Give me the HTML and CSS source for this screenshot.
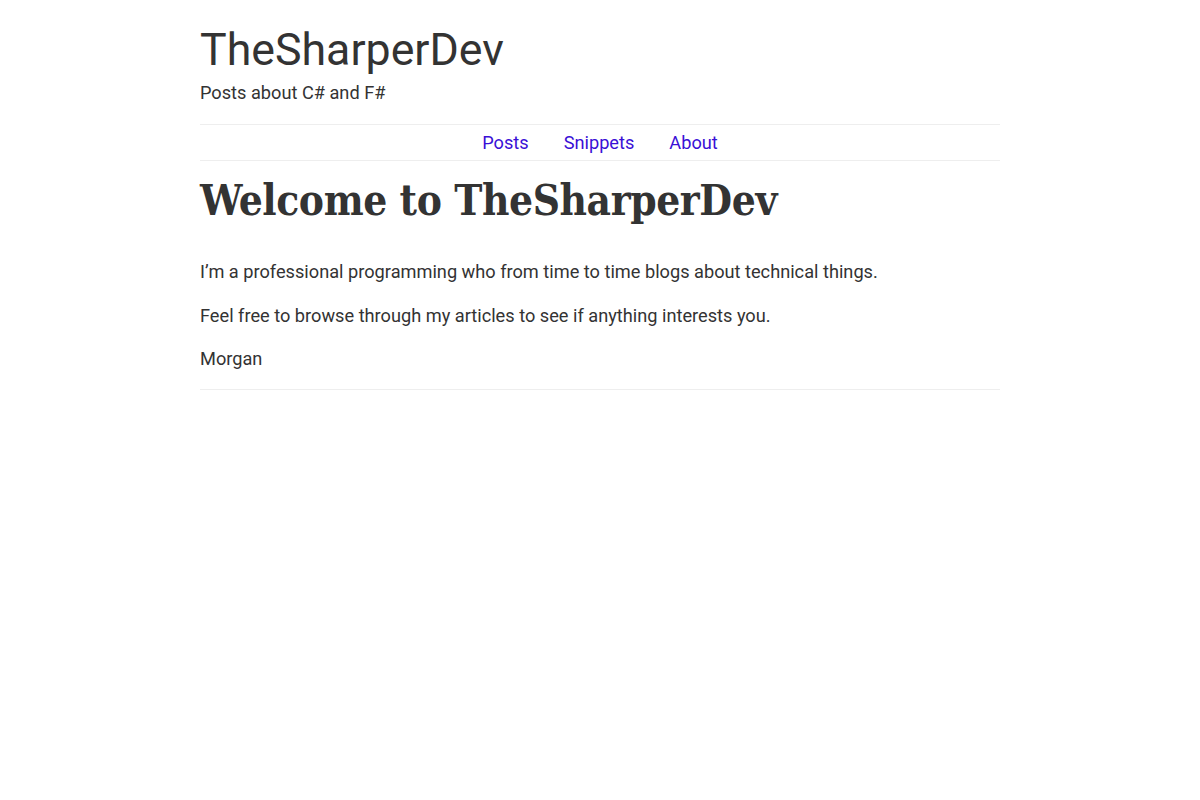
FILE: index.html
```html
<!DOCTYPE html>
<html>
<head>
<meta charset="utf-8">
<title>TheSharperDev</title>
<link rel="stylesheet" href="styles.css">
</head>
<body>
<div class="page">
  <header class="site-header">
    <div class="site-title">TheSharperDev</div>
    <div class="site-tagline">Posts about C# and F#</div>
  </header>
  <nav class="site-nav">
    <a href="#">Posts</a>
    <a href="#">Snippets</a>
    <a href="#">About</a>
  </nav>
  <main class="content">
    <h1 class="headline">Welcome to TheSharperDev</h1>
    <p>I’m a professional programming who from time to time blogs about technical things.</p>
    <p>Feel free to browse through my articles to see if anything interests you.</p>
    <p>Morgan</p>
  </main>
</div>
</body>
</html>
```
FILE: styles.css
```css
html, body {
  margin: 0;
  padding: 0;
  background: #fff;
}
body {
  font-family: Roboto, "Liberation Sans", sans-serif;
  color: #333;
}
.page {
  width: 800px;
  margin: 0 auto;
}
.site-header {
  padding-top: 24px;
  padding-bottom: 17px;
}
.site-title {
  font-size: 44.7px;
  line-height: 52px;
  font-weight: 400;
}
.site-tagline {
  font-size: 18.2px;
  line-height: 28px;
  margin-top: 3px;
}
.site-nav {
  border-top: 1px solid #eee;
  border-bottom: 1px solid #eee;
  display: flex;
  justify-content: center;
  gap: 35px;
  height: 35px;
  align-items: center;
}
.site-nav a {
  color: #3a0fd6;
  text-decoration: none;
  font-size: 18.2px;
}
.content {
  border-bottom: 1px solid #eee;
}
.headline {
  font-family: "DejaVu Serif", serif;
  font-stretch: condensed;
  font-weight: bold;
  font-size: 42px;
  letter-spacing: -0.4px;
  line-height: 56px;
  margin: 12px 0 29px;
  color: #333;
}
.content p {
  font-size: 18.2px;
  line-height: 27.5px;
  margin: 0 0 16px;
}
```
